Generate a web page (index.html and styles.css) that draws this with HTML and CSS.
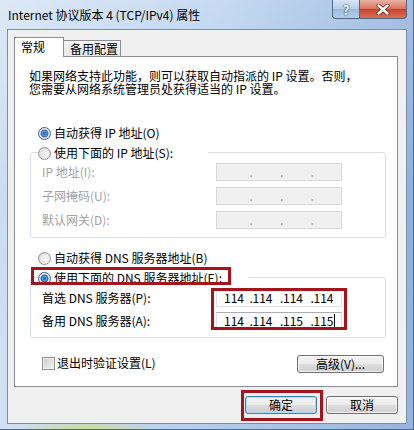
FILE: index.html
```html
<!DOCTYPE html>
<html lang="zh-CN">
<head>
    <meta charset="UTF-8">
    <meta name="viewport" content="width=device-width, initial-scale=1.0">
    <title>Internet 协议版本 4 (TCP/IPv4) 属性</title>
    <link rel="stylesheet" href="styles.css">
</head>
<body>
    <div class="window">
        <div class="titlebar">
            <span class="title">Internet 协议版本 4 (TCP/IPv4) 属性</span>
            <div class="caption-btns">
                <span class="cap help">?</span>
                <span class="cap close">
                    <svg width="14" height="11" viewBox="0 0 14 11">
                        <path d="M2.5 1.5 L11.5 9.5 M11.5 1.5 L2.5 9.5" stroke="#7a2a1c" stroke-width="4" stroke-linecap="round"/>
                        <path d="M2.5 1.5 L11.5 9.5 M11.5 1.5 L2.5 9.5" stroke="#fff" stroke-width="2.4" stroke-linecap="round"/>
                    </svg>
                </span>
            </div>
        </div>

        <div class="client">
            <div class="tabs">
                <span class="tab active">常规</span>
                <span class="tab">备用配置</span>
            </div>

            <div class="panel">
                <p class="desc">如果网络支持此功能，则可以获取自动指派的 IP 设置。否则，<br>您需要从网络系统管理员处获得适当的 IP 设置。</p>

                <div class="opt auto-ip"><span class="radio on"></span>自动获得 IP 地址(O)</div>

                <div class="group g-ip">
                    <div class="opt legend"><span class="radio"></span>使用下面的 IP 地址(S):</div>
                    <div class="fields">
                        <div class="field off">
                            <span class="lbl">IP 地址(I):</span>
                            <span class="ipbox"><span class="seg"></span><span class="dot">.</span><span class="seg"></span><span class="dot">.</span><span class="seg"></span><span class="dot">.</span><span class="seg"></span></span>
                        </div>
                        <div class="field off">
                            <span class="lbl">子网掩码(U):</span>
                            <span class="ipbox"><span class="seg"></span><span class="dot">.</span><span class="seg"></span><span class="dot">.</span><span class="seg"></span><span class="dot">.</span><span class="seg"></span></span>
                        </div>
                        <div class="field off">
                            <span class="lbl">默认网关(D):</span>
                            <span class="ipbox"><span class="seg"></span><span class="dot">.</span><span class="seg"></span><span class="dot">.</span><span class="seg"></span><span class="dot">.</span><span class="seg"></span></span>
                        </div>
                    </div>
                </div>

                <div class="opt auto-dns"><span class="radio"></span>自动获得 DNS 服务器地址(B)</div>

                <div class="group g-dns">
                    <div class="opt legend"><span class="radio on"></span>使用下面的 DNS 服务器地址(E):<span class="mark mark-legend"></span></div>
                    <div class="fields dns-fields">
                        <div class="field">
                            <span class="lbl">首选 DNS 服务器(P):</span>
                            <span class="ipbox"><span class="seg">114</span><span class="dot">.</span><span class="seg">114</span><span class="dot">.</span><span class="seg">114</span><span class="dot">.</span><span class="seg">114</span></span>
                        </div>
                        <div class="field">
                            <span class="lbl">备用 DNS 服务器(A):</span>
                            <span class="ipbox"><span class="seg">114</span><span class="dot">.</span><span class="seg">114</span><span class="dot">.</span><span class="seg">115</span><span class="dot">.</span><span class="seg">115<span class="caret"></span></span></span>
                        </div>
                        <span class="mark mark-dns"></span>
                    </div>
                </div>

                <div class="bottom-row">
                    <div class="check"><span class="box"></span>退出时验证设置(L)</div>
                    <button class="btn adv">高级(V)...</button>
                </div>
            </div>

            <div class="footer">
                <span class="btn-wrap">
                    <button class="btn default">确定</button>
                    <span class="mark mark-ok"></span>
                </span>
                <button class="btn">取消</button>
            </div>
        </div>
    </div>
</body>
</html>
```

FILE: styles.css
```css
body {
    margin: 0;
    font-family: "Noto Sans CJK SC", "Noto Sans", sans-serif;
    font-size: 12px;
    color: #000;
}
.window {
    width: 414px;
    height: 430px;
    box-sizing: border-box;
    padding: 0 6px 5px 7px;
    border-right: 1px solid #4d6a8e;
    border-bottom: 1px solid #4d6a8e;
    display: flex;
    flex-direction: column;
    background:
        radial-gradient(ellipse 70px 9px at 85px 430px, rgba(205,222,130,0.95), rgba(205,222,130,0)),
        linear-gradient(to right, rgba(255,255,255,0.4), rgba(255,255,255,0) 55%, rgba(60,110,180,0.25)),
        linear-gradient(#c6daf1, #aac6e8 45%, #b3cbea);
}

/* title bar */
.titlebar {
    height: 29px;
    margin-right: -6px;
    margin-left: -7px;
    padding: 0 6px 0 8px;
    display: flex;
    align-items: flex-start;
    flex: none;
}
.title {
    margin-top: 7px;
    line-height: 16px;
}
.caption-btns {
    margin-left: auto;
    display: flex;
    height: 19px;
}
.cap {
    box-sizing: border-box;
    height: 19px;
    display: flex;
    align-items: center;
    justify-content: center;
    border: 1px solid #4f6784;
    border-top: none;
}
.cap.help {
    width: 27px;
    border-right: none;
    border-bottom-left-radius: 4px;
    background: linear-gradient(#d7e5f5, #b6cdea 50%, #9cbbe2 50%, #b3cdeb);
    color: #fff;
    font-weight: bold;
    font-size: 13px;
    text-shadow: 0 0 2px #25466f, 0 0 1px #25466f;
}
.cap.close {
    width: 48px;
    border-bottom-right-radius: 4px;
    background: linear-gradient(#eab1a2, #d9725c 50%, #c7412a 50%, #d8705a);
}

/* client area */
.client {
    flex: 1;
    border: 1px solid #7b8fa9;
    background: #f0f0f0;
    padding: 7px 8px 0 6px;
    display: flex;
    flex-direction: column;
}
.tabs {
    display: flex;
    align-items: flex-end;
    height: 19px;
}
.tab {
    box-sizing: border-box;
    border: 1px solid #898c95;
    border-bottom: none;
    line-height: 16px;
    padding-left: 6px;
}
.tab.active {
    width: 50px;
    height: 20px;
    margin-bottom: -1px;
    padding-top: 1px;
    background: #fff;
    position: relative;
    z-index: 1;
}
.tab:not(.active) {
    width: 57px;
    height: 16px;
    border-left: none;
    background: linear-gradient(#f6f6f6, #e8e8e8);
}
.panel {
    width: 384px;
    height: 331px;
    box-sizing: border-box;
    border: 1px solid #898c95;
    background: #fff;
}
.desc {
    margin: 12px 0 0 14px;
    line-height: 13px;
}

/* radios and groups */
.opt {
    display: flex;
    align-items: center;
    height: 16px;
    line-height: 16px;
    white-space: nowrap;
}
.radio {
    box-sizing: border-box;
    width: 13px;
    height: 13px;
    margin-right: 3px;
    flex: none;
    border: 1px solid #929292;
    border-radius: 50%;
    background: radial-gradient(circle at 60% 60%, #fafafa 0, #ececec 45%, #cdcdcd 100%);
}
.radio.on {
    border-color: #3d5d8a;
    background: radial-gradient(circle, #1c5aa6 0, #5aa0e0 2.4px, #2d5f9e 3.4px, #e3e9f0 4.4px, #f5f5f5 100%);
}
.auto-ip {
    margin: 30px 0 0 23px;
}
.auto-dns {
    margin: 12px 0 0 23px;
}
.group {
    box-sizing: border-box;
    width: 356px;
    margin-left: 15px;
    border: 1px solid #d5dfe5;
    border-radius: 3px;
}
.g-ip {
    height: 86px;
    margin-top: 11px;
}
.g-dns {
    height: 61px;
    margin-top: 11px;
}
.legend {
    margin: -8px 0 0 7px;
    background: #fff;
    position: relative;
}
.g-ip .legend {
    width: 170px;
}
.g-dns .legend {
    width: 210px;
}
.fields {
    margin-left: 11px;
    display: flex;
    flex-direction: column;
    gap: 6px;
    margin-top: 2px;
}
.dns-fields {
    gap: 5px;
    margin-top: 3px;
    position: relative;
}
.field {
    display: flex;
    align-items: center;
    height: 18px;
    line-height: 16px;
}
.lbl {
    width: 174px;
    white-space: nowrap;
}
.field.off .lbl {
    color: #a3a3a3;
}
.ipbox {
    box-sizing: border-box;
    width: 126px;
    height: 18px;
    display: flex;
    align-items: center;
    padding-left: 7px;
    background: #fff;
    border: 1px solid #e2e3ea;
    border-top-color: #abadb3;
}
.field.off .ipbox {
    background: #f0f0f0;
    border-color: #d9d9d9;
    color: #a0a0a0;
}
.seg {
    width: 28px;
    display: flex;
    align-items: center;
}
.seg:first-child {
    width: 26px;
}
.dot {
    width: 3px;
}
.caret {
    width: 1px;
    height: 14px;
    margin-left: 1px;
    background: #000;
}

/* red annotation boxes */
.mark {
    position: absolute;
    border: 3px solid #a3141c;
    box-sizing: border-box;
    pointer-events: none;
}
.mark-legend {
    left: -7px;
    top: -3px;
    width: 200px;
    height: 18px;
}
.mark-dns {
    left: 169px;
    top: -1px;
    width: 136px;
    height: 42px;
}
.mark-ok {
    left: -4px;
    top: -6px;
    width: 82px;
    height: 31px;
}

/* bottom row */
.bottom-row {
    display: flex;
    justify-content: space-between;
    align-items: flex-start;
    margin: 17px 13px 0 27px;
}
.check {
    display: flex;
    align-items: center;
    height: 16px;
    line-height: 16px;
}
.box {
    box-sizing: border-box;
    width: 13px;
    height: 13px;
    margin-right: 2px;
    border: 1px solid #8f8f8f;
    background: linear-gradient(135deg, #c9c9c9, #f4f4f4);
    box-shadow: inset 0 0 0 1px #f2f2f2;
}
.btn {
    box-sizing: border-box;
    width: 72px;
    height: 18px;
    padding: 0;
    font: inherit;
    line-height: 16px;
    color: #000;
    border: 1px solid #707070;
    border-radius: 3px;
    background: linear-gradient(#f2f2f2, #ebebeb 50%, #dddddd 50%, #cfcfcf);
    box-shadow: inset 0 0 0 1px rgba(255,255,255,0.75);
}
.btn.adv {
    width: 87px;
}
.footer {
    margin-top: 9px;
    display: flex;
    justify-content: flex-end;
    gap: 9px;
}
.btn-wrap {
    position: relative;
    display: flex;
}
.btn.default {
    border-color: #3c7fb1;
    box-shadow: inset 0 0 0 1px #a9dcf7;
}
```
